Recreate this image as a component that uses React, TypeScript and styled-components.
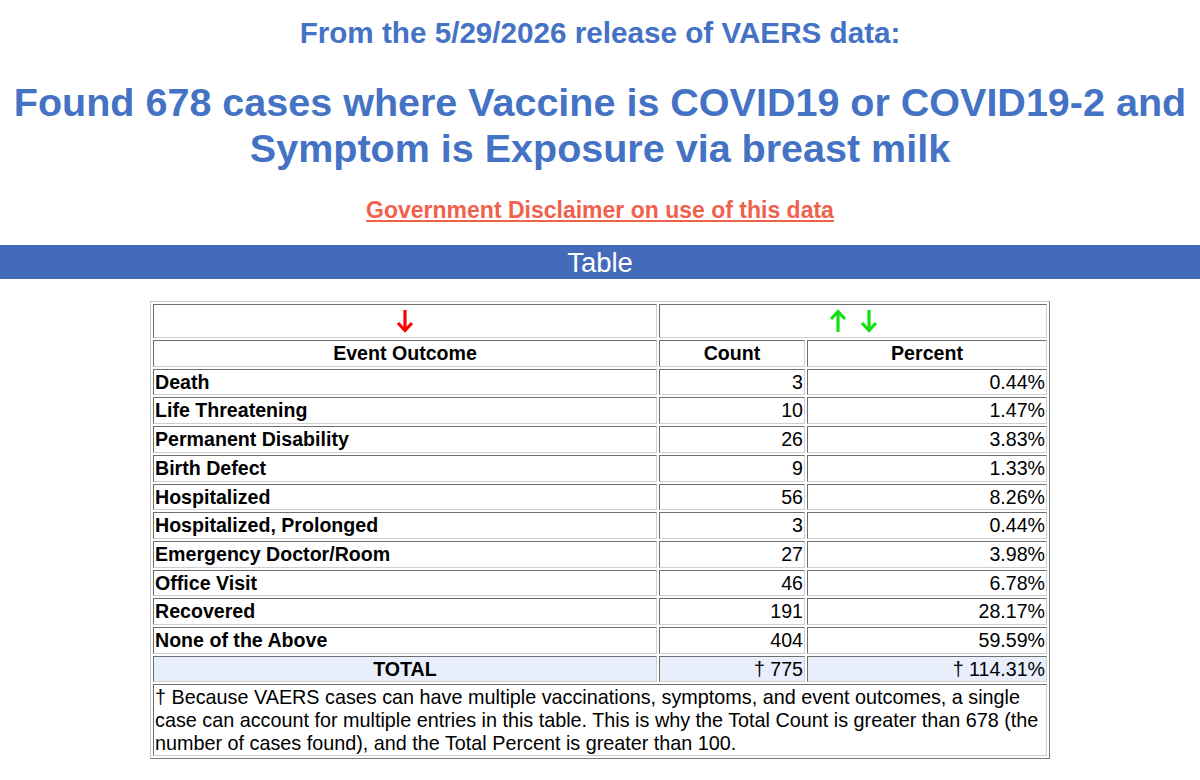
import React from "react";
import styled, { createGlobalStyle } from "styled-components";

const Global = createGlobalStyle`
  html, body { margin: 0; padding: 0; background: #fff; }
  body { font-family: "Liberation Sans", Arial, sans-serif; color: #000; }
`;

const Page = styled.div`
  width: 1200px;
  padding-top: 16px;
  display: flex;
  flex-direction: column;
  align-items: center;
`;

const Release = styled.h2`
  margin: 0;
  font-size: 29.65px;
  line-height: 34px;
  font-weight: bold;
  color: #4472c4;
  text-align: center;
`;

const Title = styled.h1`
  margin: 29px 0 0;
  width: 1200px;
  font-size: 39.5px;
  line-height: 46px;
  font-weight: bold;
  color: #4472c4;
  text-align: center;
`;

const Disclaimer = styled.a`
  margin-top: 26px;
  font-size: 23px;
  line-height: 26px;
  font-weight: bold;
  color: #f0614c;
  text-decoration: underline;
  text-underline-offset: 2px;
`;

const Bar = styled.div`
  margin-top: 22px;
  width: 100%;
  height: 34px;
  background: #436bba;
  color: #fff;
  font-size: 27.5px;
  line-height: 35px;
  text-align: center;
`;

const Table = styled.table`
  margin-top: 22px;
  width: 900px;
  border-collapse: separate;
  border-spacing: 2px;
  border: 1px solid;
  border-color: #c8c8c8 #7a7a7a #7a7a7a #c8c8c8;
  font-size: 19.6px;
  line-height: 22.7px;
`;

const Cell = styled.td<{ $align?: "left" | "right" | "center"; $bold?: boolean; $total?: boolean }>`
  border: 1px solid;
  border-color: #6e6e6e #cfcfcf #cfcfcf #6e6e6e;
  padding: 1px 1px;
  text-align: ${(p) => p.$align || "left"};
  font-weight: ${(p) => (p.$bold ? "bold" : "normal")};
  background: ${(p) => (p.$total ? "#e8eefb" : "#fff")};
  white-space: nowrap;
`;

const ArrowCell = styled.td`
  border: 1px solid;
  border-color: #6e6e6e #cfcfcf #cfcfcf #6e6e6e;
  padding: 0;
  height: 32px;
  text-align: center;
  vertical-align: middle;
`;

const ArrowGroup = styled.span`
  display: inline-flex;
  gap: 13px;
  align-items: center;
  vertical-align: middle;
`;

const NoteCell = styled.td`
  border: 1px solid;
  border-color: #6e6e6e #cfcfcf #cfcfcf #6e6e6e;
  padding: 1px 1px;
  font-size: 19.8px;
  line-height: 22.6px;
`;

const Arrow = ({ dir, color }: { dir: "up" | "down"; color: string }) => (
  <svg width="18" height="24" viewBox="0 0 18 24" style={{ display: "block" }}>
    {dir === "down" ? (
      <g fill="none" stroke={color} strokeWidth="3.2" strokeLinecap="butt" strokeLinejoin="miter">
        <line x1="9" y1="1" x2="9" y2="21" />
        <polyline points="2,14 9,21.5 16,14" />
      </g>
    ) : (
      <g fill="none" stroke={color} strokeWidth="3.2" strokeLinecap="butt" strokeLinejoin="miter">
        <line x1="9" y1="23" x2="9" y2="3" />
        <polyline points="2,10 9,2.5 16,10" />
      </g>
    )}
  </svg>
);

const rows: [string, string, string][] = [
  ["Death", "3", "0.44%"],
  ["Life Threatening", "10", "1.47%"],
  ["Permanent Disability", "26", "3.83%"],
  ["Birth Defect", "9", "1.33%"],
  ["Hospitalized", "56", "8.26%"],
  ["Hospitalized, Prolonged", "3", "0.44%"],
  ["Emergency Doctor/Room", "27", "3.98%"],
  ["Office Visit", "46", "6.78%"],
  ["Recovered", "191", "28.17%"],
  ["None of the Above", "404", "59.59%"],
];

export default function App() {
  return (
    <>
      <Global />
      <Page>
        <Release>From the 5/29/2026 release of VAERS data:</Release>
        <Title>
          Found 678 cases where Vaccine is COVID19 or COVID19-2 and
          <br />
          Symptom is Exposure via breast milk
        </Title>
        <Disclaimer href="#">Government Disclaimer on use of this data</Disclaimer>
        <Bar>Table</Bar>
        <Table>
          <colgroup>
            <col style={{ width: 504 }} />
            <col style={{ width: 146 }} />
            <col />
          </colgroup>
          <tbody>
            <tr>
              <ArrowCell>
                <ArrowGroup>
                  <Arrow dir="down" color="#ff0000" />
                </ArrowGroup>
              </ArrowCell>
              <ArrowCell colSpan={2}>
                <ArrowGroup>
                  <Arrow dir="up" color="#11e011" />
                  <Arrow dir="down" color="#11e011" />
                </ArrowGroup>
              </ArrowCell>
            </tr>
            <tr>
              <Cell $align="center" $bold>Event Outcome</Cell>
              <Cell $align="center" $bold>Count</Cell>
              <Cell $align="center" $bold>Percent</Cell>
            </tr>
            {rows.map(([name, count, pct]) => (
              <tr key={name}>
                <Cell $bold>{name}</Cell>
                <Cell $align="right">{count}</Cell>
                <Cell $align="right">{pct}</Cell>
              </tr>
            ))}
            <tr>
              <Cell $align="center" $bold $total>TOTAL</Cell>
              <Cell $align="right" $total>† 775</Cell>
              <Cell $align="right" $total>† 114.31%</Cell>
            </tr>
            <tr>
              <NoteCell colSpan={3}>
                † Because VAERS cases can have multiple vaccinations, symptoms, and event outcomes, a single
                case can account for multiple entries in this table. This is why the Total Count is greater than 678 (the
                number of cases found), and the Total Percent is greater than 100.
              </NoteCell>
            </tr>
          </tbody>
        </Table>
      </Page>
    </>
  );
}
